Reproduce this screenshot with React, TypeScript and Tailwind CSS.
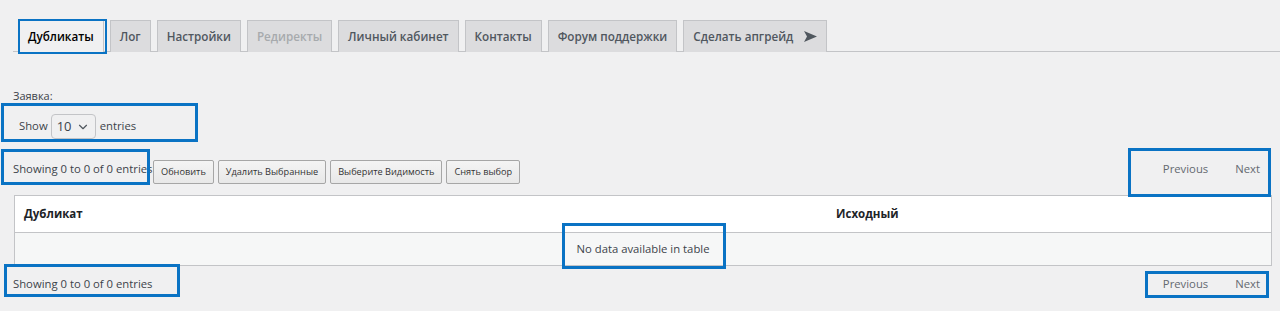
import { ChevronDown } from 'lucide-react';

const tabs = [
  { label: 'Дубликаты', active: true },
  { label: 'Лог' },
  { label: 'Настройки' },
  { label: 'Редиректы', disabled: true },
  { label: 'Личный кабинет' },
  { label: 'Контакты' },
  { label: 'Форум поддержки' },
  { label: 'Сделать апгрейд', arrow: true },
];

const actions = ['Обновить', 'Удалить Выбранные', 'Выберите Видимость', 'Снять выбор'];

// blue annotation frames drawn over the screenshot
const marks = [
  'left-[18px] top-[19px] w-[89px] h-[35px] border-2',
  'left-[1px] top-[103px] w-[197px] h-[39px] border-[3px]',
  'left-[1px] top-[149px] w-[149px] h-[36px] border-[3px]',
  'left-[1128px] top-[148px] w-[143px] h-[49px] border-[3px]',
  'left-[562px] top-[223px] w-[164px] h-[46px] border-[3px]',
  'left-[4px] top-[264px] w-[176px] h-[33px] border-[3px]',
  'left-[1145px] top-[271px] w-[124px] h-[27px] border-[3px]',
];

const Pager = () => (
  <div className="flex items-center text-[11.3px] leading-[26px] text-[#646970]">
    <span className="px-[12px]">Previous</span>
    <span className="px-[12px] ml-[3px]">Next</span>
  </div>
);

export default function App() {
  return (
    <div
      className="relative w-[1280px] h-[311px] overflow-hidden bg-[#f0f0f1] text-[#3c434a]"
      style={{ fontFamily: '"Open Sans", "Noto Sans", sans-serif' }}
    >
      {/* Tabs */}
      <div className="ml-[13px] pt-[20px] flex border-b border-[#c3c4c7] pl-[5px]">
        {tabs.map((t, i) => (
          <div
            key={t.label}
            className={`h-[32px] -mb-px px-[9px] flex items-center gap-[11px] border border-b-0 text-[11.7px] font-semibold ${
              i > 0 ? 'ml-[6px]' : ''
            } ${
              t.active
                ? 'bg-[#f0f0f1] border-[#c3c4c7] text-black border-b border-b-[#f0f0f1]'
                : 'bg-[#dcdcde] border-[#c3c4c7] text-[#50575e]'
            } ${t.disabled ? 'text-[#a7aaad]' : ''}`}
          >
            {t.label}
            {t.arrow && (
              <svg width="13" height="11" viewBox="0 0 13 11" className="text-[#50575e]">
                <path d="M0 0 L13 5.5 L0 11 L3 5.5 Z" fill="currentColor" />
              </svg>
            )}
          </div>
        ))}
      </div>

      <div className="px-[13px] pr-[8px]">
        <div className="mt-[36px] text-[11px] leading-[16px]">Заявка:</div>

        {/* Length select */}
        <div className="mt-[10px] flex items-center text-[11.3px] pl-[6px]">
          <span>Show</span>
          <div className="ml-[3px] w-[45px] h-[25px] border border-[#c3c4c7] rounded-[4px] bg-[#f0f0f1] flex items-center justify-between pl-[5px] pr-[5px] text-[13px]">
            <span>10</span>
            <ChevronDown size={14} strokeWidth={2} className="text-[#50575e]" />
          </div>
          <span className="ml-[4px]">entries</span>
        </div>

        {/* Info + buttons + pager */}
        <div className="mt-[17px] flex items-start justify-between">
          <div className="flex items-start">
            <span className="text-[11.3px] leading-[26px] w-[140px] whitespace-nowrap">
              Showing 0 to 0 of 0 entries
            </span>
            <div className="flex gap-[4px] mt-[4px]">
              {actions.map((a) => (
                <button
                  key={a}
                  className="h-[24px] px-[7px] text-[9.2px] text-[#333] border border-[#a6a6a6] rounded-[2px] bg-gradient-to-b from-[#f4f4f4] to-[#e8e8e8]"
                >
                  {a}
                </button>
              ))}
            </div>
          </div>
          <Pager />
        </div>

        {/* Table */}
        <div className="mt-[11px] ml-[1px] border border-[#c3c4c7] bg-white">
          <div className="h-[37px] flex items-center border-b border-[#c3c4c7] text-[11.5px] font-bold text-[#1d2327]">
            <span className="pl-[9px] w-[821px]">Дубликат</span>
            <span>Исходный</span>
          </div>
          <div className="h-[32px] bg-[#f6f7f7] flex items-center justify-center text-[11.3px]">
            No data available in table
          </div>
        </div>

        <div className="mt-[5px] flex items-center justify-between">
          <span className="text-[11.3px] leading-[26px]">Showing 0 to 0 of 0 entries</span>
          <Pager />
        </div>
      </div>

      {marks.map((m) => (
        <div key={m} className={`absolute border-[#0a73c4] ${m}`} />
      ))}
    </div>
  );
}
